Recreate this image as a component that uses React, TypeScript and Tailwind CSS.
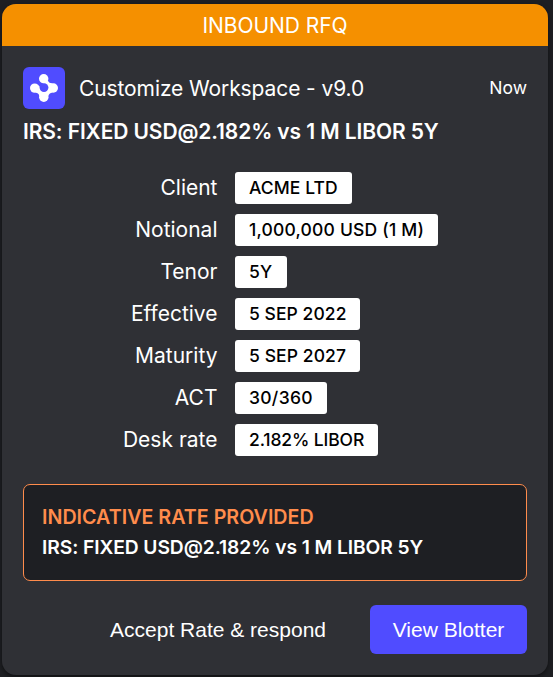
const details = [
  { label: 'Client', value: 'ACME LTD', style: 'w-[117px] tracking-[0.09px]' },
  { label: 'Notional', value: '1,000,000 USD (1 M)', style: 'w-[203px] tracking-[0.2px]' },
  { label: 'Tenor', value: '5Y', style: 'w-[52px] tracking-[0.3px]' },
  { label: 'Effective', value: '5 SEP 2022', style: 'w-[125px] tracking-[0.06px]' },
  { label: 'Maturity', value: '5 SEP 2027', style: 'w-[125px] tracking-[0.09px]' },
  { label: 'ACT', value: '30/360', style: 'w-[92px] tracking-[0.3px]' },
  { label: 'Desk rate', value: '2.182% LIBOR', style: 'w-[143px] tracking-[-0.12px]' },
];

function WorkspaceIcon() {
  return (
    <svg viewBox="0 0 42 42" className="size-[42px] shrink-0 rounded-[6px] bg-[#504cff]">
      <g fill="#fff">
        <path d="M24.8 13.8 Q26 16.3 29.5 16.4 L29.5 25.6 Q25.9 26.2 25.2 29.5 L16.4 29.5 Q15.9 26 12.5 25.6 L15.4 18.4 L21 21 L20 14.5 Z" />
        <circle cx="20.7" cy="11.7" r="4.7" />
        <circle cx="11.7" cy="21.1" r="4.7" />
        <circle cx="30.3" cy="21" r="4.7" />
        <circle cx="20.8" cy="30.3" r="4.7" />
      </g>
      <circle cx="21" cy="20.6" r="4.4" fill="#504cff" />
      <path d="M15.9 16.2 L18 16.3 L21 19 L18 22 L16.3 19 Z" fill="#504cff" />
    </svg>
  );
}

export default function App() {
  return (
    <div className="h-[677px] w-[553px] bg-[#1e1f23] pt-1 pl-0.5 font-['Inter',sans-serif] text-white">
      <section className="flex h-[671px] w-[546px] flex-col overflow-hidden rounded-[14px] bg-[#2f3035] shadow-[0_2px_5px_rgba(0,0,0,0.5)]">
        <header className="flex h-[42px] shrink-0 items-center justify-center bg-[#f59000] pt-[2px] text-[21px] tracking-[-0.06px]">
          INBOUND RFQ
        </header>
        <div className="flex flex-col px-[21px] pt-[21px]">
          <div className="flex h-[42px] items-center">
            <WorkspaceIcon />
            <span className="ml-[14px] pt-[2px] text-[21px] tracking-[-0.1px]">Customize Workspace - v9.0</span>
            <span className="ml-auto text-[17.5px]">Now</span>
          </div>
          <h1 className="mt-[7px] h-8 text-[21px] leading-8 font-semibold tracking-[-0.1px] whitespace-nowrap">
            IRS: FIXED USD@2.182% vs 1 M LIBOR 5Y
          </h1>
          <dl className="mt-6 flex flex-col gap-[10px]">
            {details.map((item) => (
              <div key={item.label} className="flex h-8 items-center gap-[17.5px]">
                <dt className="w-[194.5px] text-right text-[21px] leading-8">{item.label}</dt>
                <dd
                  className={`${item.style} h-8 rounded-[3px] bg-white pl-[14px] text-[17.5px] leading-8 font-medium whitespace-nowrap text-black`}
                >
                  {item.value}
                </dd>
              </div>
            ))}
          </dl>
          <div className="mt-7 h-[97px] rounded-[7px] border border-[#ff8c4c] bg-[#1e1f23] px-[18px] pt-[17px] whitespace-nowrap">
            <h2 className="h-[30px] text-[19.7px] leading-[30px] font-semibold text-[#ff8c4c]">
              INDICATIVE RATE PROVIDED
            </h2>
            <p className="h-[30px] text-[19.25px] leading-[30px] font-semibold tracking-[-0.09px]">
              IRS: FIXED USD@2.182% vs 1 M LIBOR 5Y
            </p>
          </div>
          <div className="mt-6 flex h-[49px] justify-end gap-[22px] font-['Liberation_Sans',Arial,sans-serif] text-[21px]">
            <button className="px-[22px]">Accept Rate &amp; respond</button>
            <button className="w-[157px] rounded-[6px] bg-[#504cff]">View Blotter</button>
          </div>
        </div>
      </section>
    </div>
  );
}
